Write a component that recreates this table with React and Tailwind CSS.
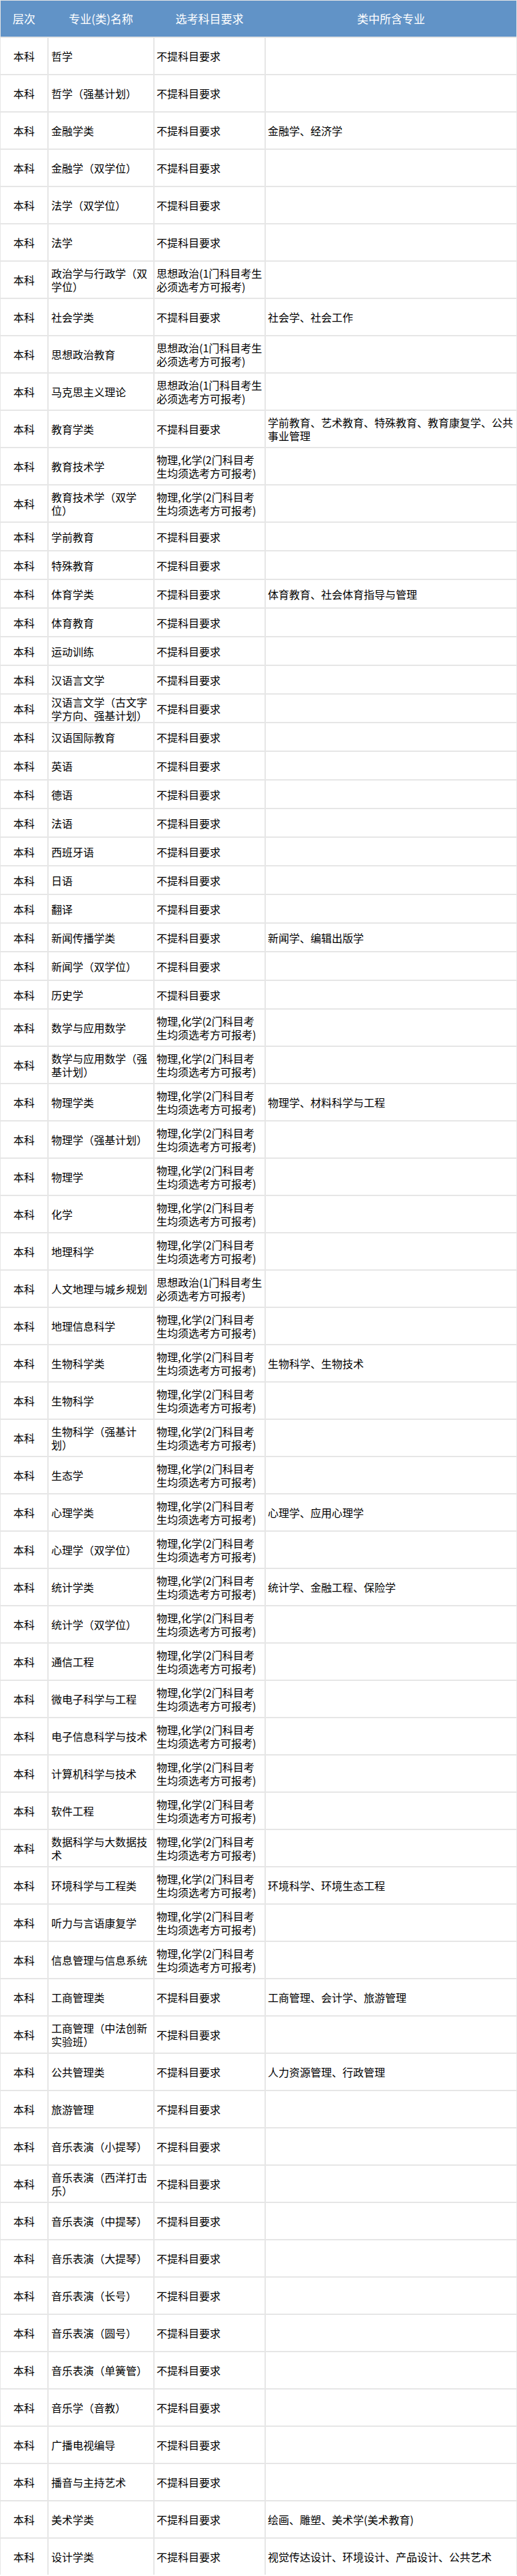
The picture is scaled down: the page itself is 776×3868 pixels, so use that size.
import React from "react";

const A = ["不提科目要求"];
const P = ["思想政治(1门科目考生", "必须选考方可报考)"];
const W = ["物理,化学(2门科目考", "生均须选考方可报考)"];

const rows = [
  [["哲学"], A, []],
  [["哲学（强基计划）"], A, []],
  [["金融学类"], A, ["金融学、经济学"]],
  [["金融学（双学位）"], A, []],
  [["法学（双学位）"], A, []],
  [["法学"], A, []],
  [["政治学与行政学（双", "学位）"], P, []],
  [["社会学类"], A, ["社会学、社会工作"]],
  [["思想政治教育"], P, []],
  [["马克思主义理论"], P, []],
  [["教育学类"], A, ["学前教育、艺术教育、特殊教育、教育康复学、公共", "事业管理"]],
  [["教育技术学"], W, []],
  [["教育技术学（双学", "位）"], W, []],
  [["学前教育"], A, [], true],
  [["特殊教育"], A, [], true],
  [["体育学类"], A, ["体育教育、社会体育指导与管理"], true],
  [["体育教育"], A, [], true],
  [["运动训练"], A, [], true],
  [["汉语言文学"], A, [], true],
  [["汉语言文学（古文字", "学方向、强基计划）"], A, [], true],
  [["汉语国际教育"], A, [], true],
  [["英语"], A, [], true],
  [["德语"], A, [], true],
  [["法语"], A, [], true],
  [["西班牙语"], A, [], true],
  [["日语"], A, [], true],
  [["翻译"], A, [], true],
  [["新闻传播学类"], A, ["新闻学、编辑出版学"], true],
  [["新闻学（双学位）"], A, [], true],
  [["历史学"], A, [], true],
  [["数学与应用数学"], W, []],
  [["数学与应用数学（强", "基计划）"], W, []],
  [["物理学类"], W, ["物理学、材料科学与工程"]],
  [["物理学（强基计划）"], W, []],
  [["物理学"], W, []],
  [["化学"], W, []],
  [["地理科学"], W, []],
  [["人文地理与城乡规划"], P, []],
  [["地理信息科学"], W, []],
  [["生物科学类"], W, ["生物科学、生物技术"]],
  [["生物科学"], W, []],
  [["生物科学（强基计", "划）"], W, []],
  [["生态学"], W, []],
  [["心理学类"], W, ["心理学、应用心理学"]],
  [["心理学（双学位）"], W, []],
  [["统计学类"], W, ["统计学、金融工程、保险学"]],
  [["统计学（双学位）"], W, []],
  [["通信工程"], W, []],
  [["微电子科学与工程"], W, []],
  [["电子信息科学与技术"], W, []],
  [["计算机科学与技术"], W, []],
  [["软件工程"], W, []],
  [["数据科学与大数据技", "术"], W, []],
  [["环境科学与工程类"], W, ["环境科学、环境生态工程"]],
  [["听力与言语康复学"], W, []],
  [["信息管理与信息系统"], W, []],
  [["工商管理类"], A, ["工商管理、会计学、旅游管理"]],
  [["工商管理（中法创新", "实验班）"], A, []],
  [["公共管理类"], A, ["人力资源管理、行政管理"]],
  [["旅游管理"], A, []],
  [["音乐表演（小提琴）"], A, []],
  [["音乐表演（西洋打击", "乐）"], A, []],
  [["音乐表演（中提琴）"], A, []],
  [["音乐表演（大提琴）"], A, []],
  [["音乐表演（长号）"], A, []],
  [["音乐表演（圆号）"], A, []],
  [["音乐表演（单簧管）"], A, []],
  [["音乐学（音教）"], A, []],
  [["广播电视编导"], A, []],
  [["播音与主持艺术"], A, []],
  [["美术学类"], A, ["绘画、雕塑、美术学(美术教育)"]],
  [["设计学类"], A, ["视觉传达设计、环境设计、产品设计、公共艺术"]],
];

function Lines({ lines }) {
  return (
    <div>
      {lines.map((l, i) => (
        <span key={i} className="block whitespace-nowrap">
          {l}
        </span>
      ))}
    </div>
  );
}

export default function App() {
  return (
    <div
      className="w-[776px] bg-[#e6e6e6] pt-px px-px text-black"
      style={{ fontFamily: '"Noto Sans CJK SC", "Noto Sans", sans-serif' }}
    >
      <div className="grid grid-cols-[70px_157px_165px_376px] gap-x-[2px] bg-[#6193c7] h-[54px] mb-[2px] text-white text-[17px]">
        <div className="flex items-center justify-center">层次</div>
        <div className="flex items-center justify-center">专业(类)名称</div>
        <div className="flex items-center justify-center">选考科目要求</div>
        <div className="flex items-center justify-center">类中所含专业</div>
      </div>
      {rows.map(([name, req, inc, small], i) => (
        <div
          key={i}
          className={
            "grid grid-cols-[70px_157px_165px_376px] gap-x-[2px] mb-[2px] text-[16px] leading-[20px] " +
            (small ? "h-[41px]" : "h-[54px]")
          }
        >
          <div className="bg-white flex items-center justify-center">本科</div>
          <div className="bg-white flex items-center px-[4px]">
            <Lines lines={name} />
          </div>
          <div className="bg-white flex items-center px-[3px]">
            <Lines lines={req} />
          </div>
          <div className="bg-white flex items-center px-[3px]">
            <Lines lines={inc} />
          </div>
        </div>
      ))}
    </div>
  );
}
